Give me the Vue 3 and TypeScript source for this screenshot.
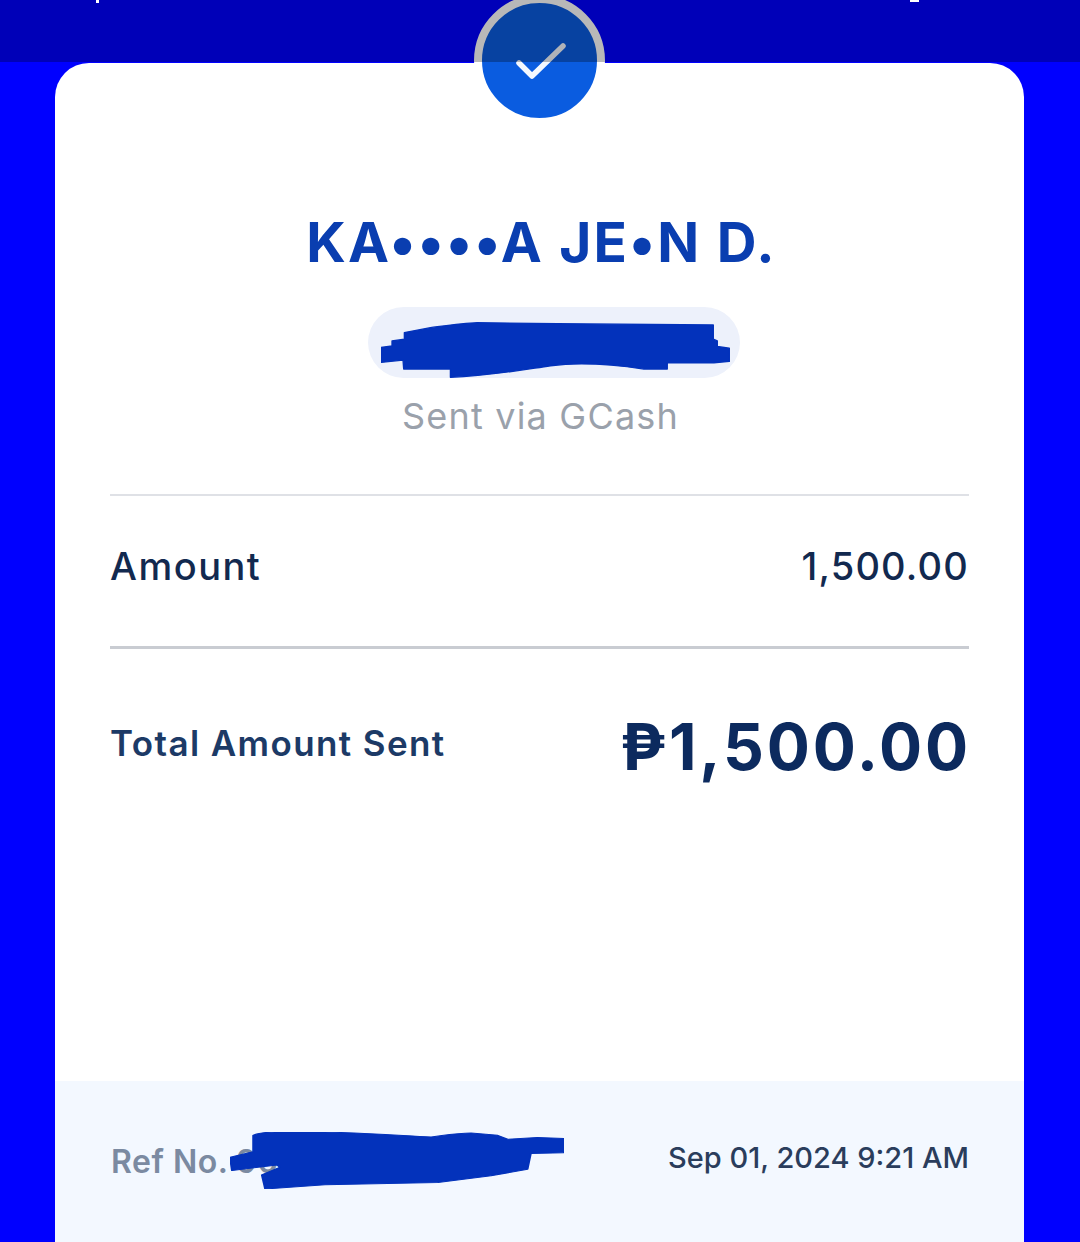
<template>
  <div class="page">
    <div class="top-shade">
      <span class="status-bit left"></span>
      <span class="status-bit right"></span>
    </div>
    <div class="card">
      <div class="badge">
        <svg width="56" height="44" viewBox="0 0 56 44" fill="none">
          <path d="M7 24 L20 37 L51 7" stroke="#f4f8ff" stroke-width="5.5" stroke-linecap="round" stroke-linejoin="round" />
        </svg>
      </div>
      <div class="body">
        <h1 class="name">KA••••A JE•N D.</h1>
        <div class="pill">
          <svg class="scribble-phone" width="349" height="57" viewBox="272 360 1046 172" preserveAspectRatio="none">
            <path d="M272 440 L305 435 L305 420 L342 415 L342 395 L420 380 C480 372 520 366 560 365 L800 368 L1268 372 L1268 415 L1280 420 L1280 437 L1316 442 L1316 482 L1270 486 L1130 486 L1130 505 L1060 505 C960 490 860 485 780 495 C680 510 600 525 480 530 L480 505 L340 505 L338 478 L272 485 Z" fill="#0332bb" stroke="#0332bb" stroke-width="4" stroke-linejoin="round" />
          </svg>
        </div>
        <p class="via">Sent via GCash</p>

        <div class="row amount-row">
          <span class="row-label">Amount</span>
          <span class="row-value">1,500.00</span>
        </div>
        <div class="row total-row">
          <span class="total-label">Total Amount Sent</span>
          <span class="total-value">₱1,500.00</span>
        </div>
      </div>
      <div class="footer">
        <span class="ref">Ref No. <span class="ref-num">90</span></span>
        <svg class="scribble-ref" width="334" height="57" viewBox="287 185 503 173" preserveAspectRatio="none">
          <path d="M287 262 L322 245 L322 195 C330 187 345 185 360 185 L430 185 C490 188 540 195 590 200 C610 195 630 188 650 188 L690 195 L705 207 L750 202 L790 205 L790 248 L740 250 L735 298 L680 318 L600 338 L430 345 L340 358 L335 315 L362 292 L358 285 L290 302 Z" fill="#0332bb" stroke="#0332bb" stroke-width="3" stroke-linejoin="round" />
        </svg>
        <span class="date">Sep 01, 2024 9:21 AM</span>
      </div>
    </div>
  </div>
</template>

<script setup lang="ts">
</script>

<style>
html,
body {
  margin: 0;
  background: #0000ff;
}
</style>

<style scoped>
.page {
  position: relative;
  box-sizing: border-box;
  width: 1080px;
  height: 1242px;
  padding: 63px 56px 0 55px;
  background: #0000ff;
  overflow: hidden;
  font-family: Inter, "Open Sans", sans-serif;
}

.top-shade {
  position: absolute;
  top: 0;
  left: 0;
  right: 0;
  height: 62px;
  background: rgba(0, 0, 0, 0.28);
  z-index: 3;
}

.status-bit {
  position: absolute;
  top: 0;
  height: 2px;
  background: #fff;
}

.status-bit.left {
  left: 96px;
  width: 3px;
  height: 3px;
}

.status-bit.right {
  left: 910px;
  width: 9px;
}

.card {
  position: relative;
  display: flex;
  flex-direction: column;
  height: 100%;
  background: #fff;
  border-radius: 34px 34px 0 0;
}

.badge {
  position: absolute;
  top: -68px;
  left: 419px;
  display: flex;
  align-items: center;
  justify-content: center;
  box-sizing: content-box;
  width: 115px;
  height: 115px;
  border: 8px solid #fff;
  border-radius: 50%;
  background: #0a5ce0;
  z-index: 2;
}

.body {
  flex: 1;
  display: flex;
  flex-direction: column;
  align-items: center;
  padding: 0 55px;
}

.name {
  margin: 149px 0 0 4px;
  color: #0a3eb0;
  font-size: 55px;
  line-height: 60px;
  font-weight: 700;
  letter-spacing: 2.2px;
}

.pill {
  position: relative;
  width: 372px;
  height: 71px;
  margin: 35px 0 0 28px;
  border-radius: 36px;
  background: #edf1fb;
}

.scribble-phone {
  position: absolute;
  top: 14px;
  left: 13px;
}

.via {
  margin: 18px 0 0 2px;
  color: #9aa1ab;
  font-size: 36px;
  line-height: 40px;
  letter-spacing: 1.2px;
}

.row {
  align-self: stretch;
  display: flex;
  justify-content: space-between;
  align-items: center;
}

.amount-row {
  box-sizing: border-box;
  height: 155px;
  padding-bottom: 11px;
  margin-top: 58px;
  border-top: 2px solid #dfe1e6;
  border-bottom: 3px solid #c9ccd2;
}

.row-label {
  color: #12294f;
  font-size: 38px;
  font-weight: 500;
  letter-spacing: 1.5px;
}

.row-value {
  color: #12294f;
  font-size: 38px;
  font-weight: 500;
  letter-spacing: 1.2px;
}

.total-row {
  height: 194px;
}

.total-label {
  margin-bottom: 6px;
  color: #1c3a66;
  font-size: 35px;
  font-weight: 600;
  letter-spacing: 1.4px;
}

.total-value {
  margin-right: -2px;
  color: #0c2a5e;
  font-size: 64px;
  font-weight: 700;
  letter-spacing: 2.8px;
}

.footer {
  position: relative;
  display: flex;
  justify-content: space-between;
  align-items: center;
  height: 161px;
  padding: 0 55px 0 56px;
  background: #f3f8ff;
}

.ref {
  color: #7b8aa1;
  font-size: 32px;
  font-weight: 600;
  letter-spacing: 0.5px;
}

.ref-num {
  color: #7b8aa1;
}

.scribble-ref {
  position: absolute;
  top: 51px;
  left: 175px;
}

.date {
  margin-bottom: 8px;
  color: #2a3d5c;
  font-size: 29px;
  font-weight: 500;
}
</style>
